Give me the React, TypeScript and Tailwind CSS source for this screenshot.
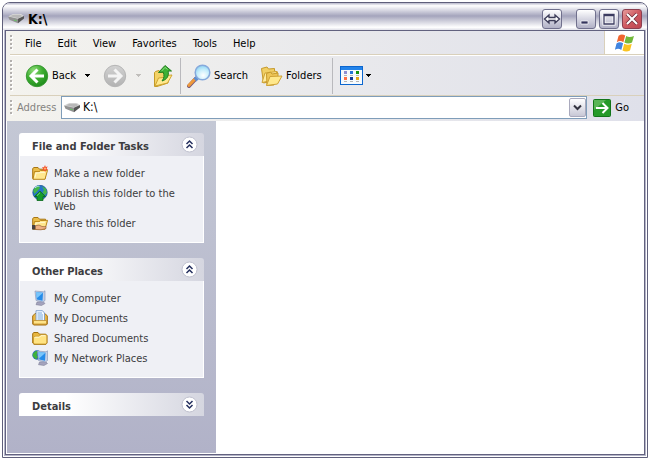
import { useState, type ReactNode } from 'react';

function DriveIcon() {
  return (
    <svg width="16" height="16" viewBox="0 0 16 16" className="shrink-0">
      <path d="M0 5.500 5 3h8l3 2-5.500 4z" fill="#dadada" />
      <path d="M1.500 5.300 5.500 3.700H12l2.500 1.400-4.200 2.200z" fill="#b8b8b8" />
      <path d="M0 5.500 10 7.800v4.400L1.500 8.800z" fill="#929292" />
      <path d="m10 7.800 6-2.800v2.600l-6 4.600z" fill="#555" />
      <path d="m6 9.100 2.600.6" stroke="#64c464" />
    </svg>
  );
}

function Grip({ dots }: { dots: number }) {
  return (
    <svg width="4" height={dots * 4} className="shrink-0" aria-hidden="true">
      {Array.from({ length: dots }, (_, i) => (
        <g key={i}>
          <rect x="1" y={i * 4 + 1} width="2" height="2" fill="#fff" />
          <rect x="0" y={i * 4} width="2" height="2" fill="#b3b0ae" />
        </g>
      ))}
    </svg>
  );
}

function Arrow({ muted = false }: { muted?: boolean }) {
  return (
    <svg width="7" height="4" viewBox="0 0 7 4" className="shrink-0" shapeRendering="crispEdges">
      <path d="M1 0h5v1H5v1H4v1H3V2H2V1H1z" fill={muted ? '#c0bebb' : '#000'} />
    </svg>
  );
}

function BackIcon() {
  return (
    <svg width="24" height="24" viewBox="0 0 24 24">
      <defs>
        <radialGradient id="back" cx=".35" cy=".25" r=".8">
          <stop offset="0" stopColor="#8fdc78" />
          <stop offset=".5" stopColor="#3fae32" />
          <stop offset="1" stopColor="#1d8a1a" />
        </radialGradient>
      </defs>
      <circle cx="12" cy="12" r="10.7" fill="url(#back)" stroke="#3b9a35" />
      <path d="M12.5 5.5 6 12l6.500 6.500M6.500 12H19" fill="none" stroke="#fff" strokeWidth="3" />
    </svg>
  );
}

function ForwardIcon() {
  return (
    <svg width="24" height="24" viewBox="0 0 24 24">
      <defs>
        <linearGradient id="fwd" x2="0" y2="1">
          <stop offset="0" stopColor="#d2d2d2" />
          <stop offset="1" stopColor="#b2b2b2" />
        </linearGradient>
      </defs>
      <circle cx="12" cy="12" r="10.7" fill="url(#fwd)" stroke="#b5b5b5" />
      <path d="m11.500 5.500 6.500 6.500-6.500 6.500M17.500 12H5" fill="none" stroke="#f4f4f4" strokeWidth="3" />
    </svg>
  );
}

function UpIcon() {
  return (
    <svg width="20" height="24" viewBox="0 0 20 24" strokeLinejoin="round">
      <path d="M1.500 8.500 2.500 7.500 6 6.500l1.500 2h6L15 10v9L4 22.500H1.500z" fill="#f4d267" stroke="#c39a28" />
      <path d="m2 22 3.500-8 5-.5 2-2 6.500-.5-4.500 8z" fill="#ffe98f" stroke="#d0a42f" />
      <path d="M5.500 8.500 12 1.500l6.500 5.500h-3.300c.8 4.500-.8 8.500-6.200 10 2.300-3 2.500-5.500 1.200-8.800z" fill="#3db135" stroke="#23801f" />
      <path d="M8.500 7.200 12 3.400l2.500 2" fill="none" stroke="#8fdf82" />
    </svg>
  );
}

function SearchIcon() {
  return (
    <svg width="24" height="24" viewBox="0 0 24 24">
      <defs>
        <radialGradient id="lens" cx=".55" cy=".7" r=".8">
          <stop offset="0" stopColor="#fff" />
          <stop offset=".5" stopColor="#c5edfb" />
          <stop offset="1" stopColor="#79c9ee" />
        </radialGradient>
      </defs>
      <path d="M2 22 9 14.500" stroke="#7b5a78" strokeWidth="4" strokeLinecap="round" />
      <path d="M2 21.300 7.500 15.500" stroke="#f09a3a" strokeWidth="3" strokeLinecap="round" />
      <path d="m8 16 2.500-2.500" stroke="#5f8fd0" strokeWidth="4" />
      <circle cx="15.500" cy="8.500" r="7.300" fill="url(#lens)" stroke="#86a9dc" strokeWidth="1.500" />
    </svg>
  );
}

function FoldersIcon() {
  return (
    <svg width="23" height="24" viewBox="0 0 23 24" strokeLinejoin="round">
      <path d="M1.500 4.500 7 3l1.500 2 6-.5V7l3 1-4 9-10 2z" fill="#f1cf64" stroke="#c69a2c" />
      <path d="m2 18.500 3-9.500 12-1.500L14 16z" fill="#ffec9f" stroke="#cfa235" />
      <path d="m6.500 9.500 4-1.500 1.500 2 6-1v4l-4 8-7 .5z" fill="#eec557" stroke="#c69a2c" />
      <path d="m6.500 21.500 3.500-9 12-.5-4.500 8z" fill="#ffe88c" stroke="#cfa235" />
    </svg>
  );
}

function ViewsIcon() {
  return (
    <svg width="23" height="19" viewBox="0 0 23 19" shapeRendering="crispEdges">
      <rect width="23" height="19" rx="1" fill="#0b66cf" />
      <path d="M1 1h21v3H1z" fill="#2383ea" />
      <path d="M1 4h21v14H1z" fill="#f6fafd" />
      <path d="M4 5h3v3H4z" fill="#8f8fd3" />
      <path d="M10 5h3v3h-3z" fill="#2374d8" />
      <path d="M16 5h3v3h-3z" fill="#149414" />
      <path d="M4 11h3v3H4z" fill="#ff7047" />
      <path d="M10 11h3v3h-3z" fill="#103896" />
      <path d="M16 11h3v3h-3z" fill="#e5a51c" />
      <path d="M4 9h3v1H4zM10 9h3v1h-3zM16 9h3v1h-3zM4 15h3v1H4zM10 15h3v1h-3zM16 15h3v1h-3z" fill="#b4b4b4" />
    </svg>
  );
}

function WindowsLogo() {
  return (
    <svg width="20" height="20" viewBox="0 0 20 20">
      <path d="M3.600 2.700C5.800 1 8 1 10.200 2.500L8.400 9.200C6.200 7.700 4 7.700 1.800 9.300z" fill="#f0652f" />
      <path d="M11.200 3C13.400 4.300 16 4.200 19 2.900L17 9.500c-2.600 1.400-5 1.300-7.600.1z" fill="#72b83a" />
      <path d="M1.500 10.400c2.300-1.600 4.500-1.500 6.600-.1L6.300 17C4 15.400 2 15.500-.2 17z" fill="#4285e0" />
      <path d="M9.200 10.700c2.600 1.300 5 1.300 7.600 0L15 17.400c-2.600 1.400-5 1.300-7.500 0z" fill="#f9c322" />
    </svg>
  );
}

function FolderIcon() {
  return (
    <svg width="16" height="16" viewBox="0 0 16 16" strokeLinejoin="round">
      <path d="M.7 13V3.500L2 2.500h4l1.500 1.700h6.300L15 5.500V13l-1 1.300H2z" fill="#e8b63f" stroke="#a0700f" />
      <path d="M1.500 7.500 3 6.300h4l1.500-1.500h5.500l.8 1V13l-1 1H2.500l-1-1z" fill="#ffe382" stroke="#c08d1e" strokeWidth=".7" />
      <path d="M2.500 8 3.300 7.200h4.200L9 5.700h4.500" fill="none" stroke="#fff8d2" />
    </svg>
  );
}

function OpenFolder({ children }: { children?: ReactNode }) {
  return (
    <svg width="16" height="16" viewBox="0 0 16 16" strokeLinejoin="round">
      <path d="M.7 13.500V3.500L2 2.500h4l1.500 1.700h6v9z" fill="#eabd49" stroke="#a87613" />
      <path d="M1 14.300 2.500 6.500l4.500.2 1.500-1.200 7-.2-2.500 9z" fill="#ffe78d" stroke="#b98519" />
      <path d="m3 12.500 1-4.500 9-.7" fill="none" stroke="#fff8d2" />
      {children}
    </svg>
  );
}

function NewFolderIcon() {
  return (
    <OpenFolder>
      <path d="m13 0 .8 2 2-.4-1.200 1.700L16 5l-2 .1L13.200 7 12 5.200l-2 .3 1.200-1.800L10 2l2 .2z" fill="#f4502c" />
      <circle cx="13" cy="3.600" r="1.100" fill="#ffb36b" />
    </OpenFolder>
  );
}

function ShareFolderIcon() {
  return (
    <OpenFolder>
      <path d="M0 10h3.500v4.500H0z" fill="#49413f" />
      <path d="M3.500 10.800 7 10l3 1.500 4 .2v1.800l-5 1.300-5.500-.3z" fill="#eeb083" stroke="#97613c" strokeWidth=".7" />
    </OpenFolder>
  );
}

function PublishIcon() {
  return (
    <svg width="16" height="16" viewBox="0 0 16 16">
      <circle cx="8" cy="7.500" r="7.200" fill="#2474c9" stroke="#164c91" strokeWidth=".7" />
      <path d="M1.200 6C2 3 4 1 6.800.8L8 3 5 6.500 2.500 9zM10 1.200l4 2.500 1 4-2 2.500-2.500-3 1.500-2z" fill="#43b649" />
      <path d="M3 2.800C4.500 1.500 6 1 7.500 1.200" stroke="#b9e7f5" fill="none" />
      <path d="m8 6.200 5.500 5.300H11v4H5v-4H2.500z" fill="#159d2c" stroke="#09681a" strokeWidth=".8" />
      <path d="M8 7.700 5 10.600" stroke="#7be287" />
    </svg>
  );
}

function Monitor() {
  return (
    <>
      <path d="m5 12 6-.5 2 2-3.500 2-5.500-.8z" fill="#a4a3bd" stroke="#77768f" strokeWidth=".5" />
      <path d="m3 1 8.500.8 1.500-1v9.700l-2 1.500-7-1.500z" fill="#c3cfe6" stroke="#8190b4" strokeWidth=".6" />
      <path d="m4 2 7 .8-.5 8-5.700-1.300z" fill="#268ce9" />
      <path d="m4 2 7 .8-5 4.500-1.500 1z" fill="#79c5fa" />
    </>
  );
}

function ComputerIcon() {
  return (
    <svg width="16" height="16" viewBox="0 0 16 16">
      <Monitor />
    </svg>
  );
}

function DocumentsIcon() {
  return (
    <svg width="16" height="16" viewBox="0 0 16 16" strokeLinejoin="round">
      <path d="M.7 14V6L3 3.500h10L15.300 6v8l-1 1H1.700z" fill="#eeb942" stroke="#9f6d15" />
      <path d="M4 .7h6.500L12.500 3v8H4z" fill="#f5faff" stroke="#6c92c8" strokeWidth=".8" />
      <path d="M5.500 3H10M5.500 5h5.500M5.500 7h5.500M5.500 9h5.500" stroke="#78a8dc" />
      <path d="M1.500 10.500h13V14h-13z" fill="#ffe388" stroke="#ba8521" strokeWidth=".7" />
    </svg>
  );
}

function NetworkIcon() {
  return (
    <svg width="16" height="16" viewBox="0 0 16 16">
      <circle cx="5" cy="5" r="4.700" fill="#2767c1" />
      <path d="M1 3.500 4 .7l2 1-1.500 3L6 7 4 9.500.6 6z" fill="#3eb13b" />
      <g transform="translate(2.500 0)">
        <Monitor />
      </g>
    </svg>
  );
}

function TitleButton({ label, close = false, children }: { label: string; close?: boolean; children: ReactNode }) {
  return (
    <button
      aria-label={label}
      className={`flex size-5 items-center justify-center rounded-[3px] border ${
        close
          ? 'border-[#8b3f50] bg-linear-to-br from-[#e59a9b] via-[#cf5960] to-[#bd4651]'
          : 'border-[#70708d] bg-linear-to-b from-white via-[#d6d6e2] to-[#b1b1c6]'
      }`}
    >
      <svg width="18" height="18" viewBox="0 0 18 18">{children}</svg>
    </button>
  );
}

interface PanelProps {
  title: string;
  items: { label: string; icon: ReactNode }[];
  defaultOpen?: boolean;
}

function TaskPanel({ title, items, defaultOpen = true }: PanelProps) {
  const [open, setOpen] = useState(defaultOpen);

  return (
    <section>
      <h2>
        <button
          onClick={() => setOpen((v) => !v)}
          aria-expanded={open}
          className="flex h-[23px] w-full items-center justify-between rounded-t-[3px] bg-linear-to-r from-white from-25% to-[#d5d6e0] pr-1.5 pl-[13px] text-left font-bold"
        >
          <span className="pt-[3px]">{title}</span>
          <svg width="17" height="17" viewBox="0 0 17 17" className="shrink-0">
            <circle cx="8.500" cy="8.500" r="7.500" fill="#fff" stroke="#bfc0ce" />
            <path
              d={open ? 'm5.500 8 3-3 3 3m-6 4 3-3 3 3' : 'm5.500 5 3 3 3-3m-6 4 3 3 3-3'}
              fill="none"
              stroke="#25305f"
              strokeWidth="1.500"
            />
          </svg>
        </button>
      </h2>
      {open && items.length > 0 && (
        <ul className="flex flex-col gap-1 border border-t-0 border-white bg-[#eff0f5] px-3 pt-[9px] pb-[11px]">
          {items.map((item) => (
            <li key={item.label}>
              <a href="#" className="flex gap-1.5">
                <span className="size-4 shrink-0">{item.icon}</span>
                <span className="-mb-0.5 pt-0.5">{item.label}</span>
              </a>
            </li>
          ))}
        </ul>
      )}
    </section>
  );
}

const MENUS = ['File', 'Edit', 'View', 'Favorites', 'Tools', 'Help'];

const TASKS = [
  { label: 'Make a new folder', icon: <NewFolderIcon /> },
  { label: 'Publish this folder to the Web', icon: <PublishIcon /> },
  { label: 'Share this folder', icon: <ShareFolderIcon /> },
];

const PLACES = [
  { label: 'My Computer', icon: <ComputerIcon /> },
  { label: 'My Documents', icon: <DocumentsIcon /> },
  { label: 'Shared Documents', icon: <FolderIcon /> },
  { label: 'My Network Places', icon: <NetworkIcon /> },
];

export default function App() {
  const [address, setAddress] = useState('K:\\');

  return (
    <div className="flex min-h-screen flex-col bg-white pt-0.5 pr-px pb-px pl-0.5 font-['DejaVu_Sans_Condensed','DejaVu_Sans',sans-serif] text-[11px] leading-[13px] text-black [font-stretch:condensed]">
      <div className="flex grow flex-col overflow-hidden rounded-t-lg border border-[#5f5f7b] bg-white">
        <header className="flex h-[27px] shrink-0 items-center bg-[linear-gradient(#b8b8cb,#fff_10%,#dcdce6_25%,#a4a4bc_48%,#c4c4d3_62%,#fff_90%,#dfdfe8)] pt-1 pr-[5px] pl-[5px]">
          <DriveIcon />
          <h1 className="ml-1 grow text-[14px] leading-4 font-bold">K:\</h1>
          <div className="flex gap-[3px]">
            <div className="mr-[11px] flex">
              <TitleButton label="Move to other monitor">
                <path d="M1.500 9 6 5v2.500h6V5l4.500 4-4.500 4v-2.500H6V13z" fill="#fff" stroke="#3c3c58" strokeWidth="1.300" />
              </TitleButton>
            </div>
            <TitleButton label="Minimize">
              <path d="M4 11h7v3H4z" fill="#35355d" stroke="#fff" strokeWidth=".7" />
            </TitleButton>
            <TitleButton label="Maximize">
              <path d="M4 5h10v9H4z" fill="none" stroke="#fff" strokeWidth="3" />
              <path d="M4 4.500h10V14H4zM4 5.500h10" fill="none" stroke="#3b3b60" strokeWidth="1.300" />
            </TitleButton>
            <TitleButton label="Close" close>
              <path d="m4 4 10 10M14 4 4 14" stroke="#71303c" strokeWidth="3.500" />
              <path d="m4 4 10 10M14 4 4 14" stroke="#fff" strokeWidth="2" />
            </TitleButton>
          </div>
        </header>

        <div className="mx-px mb-px flex grow flex-col border border-t-0 border-[#b5b5c9]">
          <div className="flex grow flex-col border border-[#62627f]">
            <div className="bg-linear-to-r from-[#f4f3ee] to-[#dfe0ea] pl-1">
              <nav className="flex h-6 items-stretch border-b border-[#d9d0bb]">
                <div className="flex grow items-center pt-px">
                  <Grip dots={4} />
                  <ul className="ml-[3px] flex">
                    {MENUS.map((menu) => (
                      <li key={menu}>
                        <button className="px-2">{menu}</button>
                      </li>
                    ))}
                  </ul>
                </div>
                <div className="flex w-10 items-center justify-center border-l border-[#d9d0bb] bg-white">
                  <WindowsLogo />
                </div>
              </nav>

              <div className="flex h-[41px] items-center border-t border-b border-t-white border-b-[#d9d0bb]">
                <Grip dots={8} />
                <button className="ml-[11px] flex items-center gap-[3px]">
                  <BackIcon />
                  Back
                </button>
                <button aria-label="Back history" className="ml-2">
                  <Arrow />
                </button>
                <button aria-label="Forward" className="ml-3">
                  <ForwardIcon />
                </button>
                <button aria-label="Forward history" className="ml-2">
                  <Arrow muted />
                </button>
                <button aria-label="Up" className="ml-[11px]">
                  <UpIcon />
                </button>
                <div className="ml-[7px] h-9 w-px bg-[#b9b9bd]" />
                <button className="ml-1.5 flex items-center gap-[3px]">
                  <SearchIcon />
                  Search
                </button>
                <button className="ml-3 flex items-center gap-[3px]">
                  <FoldersIcon />
                  Folders
                </button>
                <div className="ml-2.5 h-9 w-px bg-[#b9b9bd]" />
                <button aria-label="Views" className="ml-[7px] flex items-center gap-0.5">
                  <ViewsIcon />
                  <Arrow />
                </button>
              </div>

              <form className="flex h-[25px] items-start" onSubmit={(e) => e.preventDefault()}>
                <div className="pt-1">
                  <Grip dots={4} />
                </div>
                <label htmlFor="address" className="ml-[3px] w-11 pt-[5px] text-[#85837f]">
                  Address
                </label>
                <div className="flex h-[23px] grow items-center border border-[#7f9db9] bg-white pl-0.5">
                  <DriveIcon />
                  <input
                    id="address"
                    value={address}
                    onChange={(e) => setAddress(e.target.value)}
                    className="ml-[3px] w-0 grow text-[12px] outline-none"
                  />
                  <button
                    type="button"
                    aria-label="Show addresses"
                    className="flex h-[19px] w-[17px] items-center justify-center rounded-xs border border-[#a9a9bd] bg-linear-to-b from-white to-[#c8c8d6]"
                  >
                    <svg width="9" height="7" viewBox="0 0 9 7">
                      <path d="m1 1.500 3.500 3.500L8 1.500" fill="none" stroke="#33333f" strokeWidth="2" />
                    </svg>
                  </button>
                </div>
                <button className="mr-[15px] ml-1.5 flex h-[23px] items-center gap-1">
                  <svg width="18" height="18" viewBox="0 0 18 18">
                    <rect x=".5" y=".5" width="17" height="17" rx="1" fill="#259a29" stroke="#127519" />
                    <path d="M1 1h12L1 11z" fill="#59b556" />
                    <path d="M3 9h11M9.500 4l5 5-5 5" fill="none" stroke="#fff" strokeWidth="2" />
                  </svg>
                  Go
                </button>
              </form>
            </div>

            <div className="flex grow border border-t-0 border-white">
              <aside className="flex w-[209px] shrink-0 flex-col gap-[15px] bg-linear-to-b from-[#c4c8d5] to-[#b1b2c8] px-3 pt-3 pb-6 text-[#3c3c40]">
                <TaskPanel title="File and Folder Tasks" items={TASKS} />
                <TaskPanel title="Other Places" items={PLACES} />
                <TaskPanel title="Details" items={[]} defaultOpen={false} />
              </aside>
              <main className="grow bg-white" />
            </div>
          </div>
        </div>
      </div>
    </div>
  );
}
